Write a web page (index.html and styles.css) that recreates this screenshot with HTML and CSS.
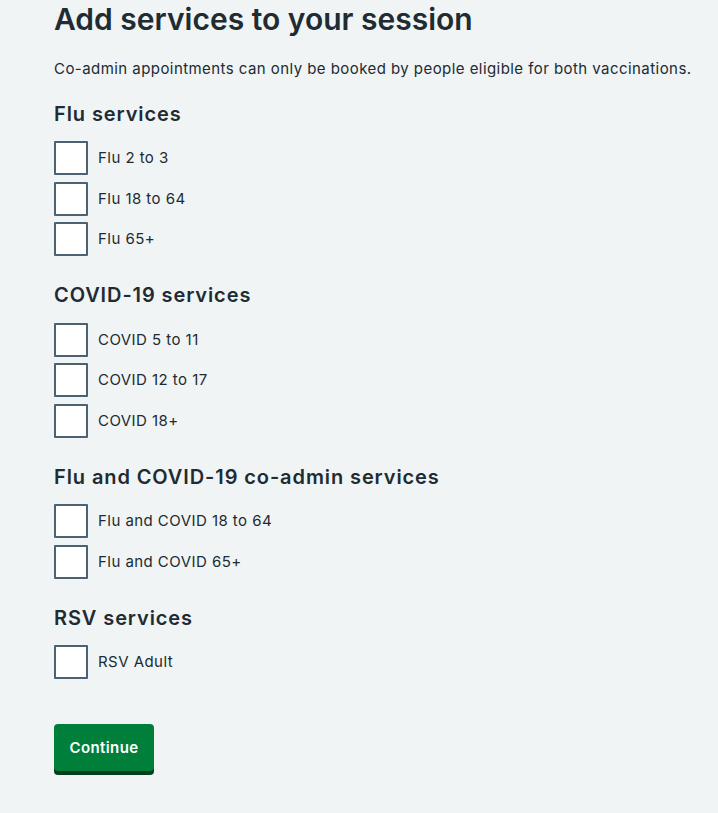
FILE: index.html
```html
<!DOCTYPE html>
<html lang="en">
<head>
  <meta charset="UTF-8" />
  <meta name="viewport" content="width=device-width, initial-scale=1.0" />
  <title>Add services to your session</title>
  <link rel="stylesheet" href="styles.css">
</head>
<body>

  <main class="page">
    <h1 class="page-title">Add services to your session</h1>
    <p class="hint">Co-admin appointments can only be booked by people eligible for both vaccinations.</p>

    <form class="services-form">
      <fieldset class="service-group">
        <legend class="group-title">Flu services</legend>
        <div class="checkboxes">
          <label class="checkbox-item"><input type="checkbox" name="services" value="flu-2-3"> Flu 2 to 3</label>
          <label class="checkbox-item"><input type="checkbox" name="services" value="flu-18-64"> Flu 18 to 64</label>
          <label class="checkbox-item"><input type="checkbox" name="services" value="flu-65"> Flu 65+</label>
        </div>
      </fieldset>

      <fieldset class="service-group">
        <legend class="group-title">COVID-19 services</legend>
        <div class="checkboxes">
          <label class="checkbox-item"><input type="checkbox" name="services" value="covid-5-11"> COVID 5 to 11</label>
          <label class="checkbox-item"><input type="checkbox" name="services" value="covid-12-17"> COVID 12 to 17</label>
          <label class="checkbox-item"><input type="checkbox" name="services" value="covid-18"> COVID 18+</label>
        </div>
      </fieldset>

      <fieldset class="service-group">
        <legend class="group-title">Flu and COVID-19 co-admin services</legend>
        <div class="checkboxes">
          <label class="checkbox-item"><input type="checkbox" name="services" value="flu-covid-18-64"> Flu and COVID 18 to 64</label>
          <label class="checkbox-item"><input type="checkbox" name="services" value="flu-covid-65"> Flu and COVID 65+</label>
        </div>
      </fieldset>

      <fieldset class="service-group">
        <legend class="group-title">RSV services</legend>
        <div class="checkboxes">
          <label class="checkbox-item"><input type="checkbox" name="services" value="rsv-adult"> RSV Adult</label>
        </div>
      </fieldset>

      <button type="submit" class="btn">Continue</button>
    </form>
  </main>

</body>
</html>
```

FILE: styles.css
```css
body {
  margin: 0;
  background-color: #f0f4f5;
  color: #212b32;
  font-family: Inter, "Noto Sans", sans-serif;
}

.page {
  padding: 1px 20px 40px 54px;
}

.page-title {
  font-size: 30px;
  line-height: 36px;
  font-weight: 600;
  margin: 0 0 20.5px;
}

.hint {
  font-size: 15px;
  line-height: 22px;
  letter-spacing: 0.44px;
  margin: 0 0 20px;
}

.service-group {
  border: none;
  padding: 0;
  margin: 0 0 25px;
}

.group-title {
  padding: 0;
  font-size: 20px;
  line-height: 28px;
  font-weight: 600;
  letter-spacing: 0.9px;
  margin-bottom: 13.5px;
}

.checkboxes {
  display: flex;
  flex-direction: column;
  gap: 6.5px;
}

.checkbox-item {
  display: flex;
  align-items: center;
  gap: 10px;
  font-size: 15px;
  line-height: 22px;
  letter-spacing: 0.45px;
  cursor: pointer;
}

.checkbox-item input {
  appearance: none;
  width: 34px;
  height: 34px;
  margin: 0;
  background: #ffffff;
  border: 2px solid #4c6272;
  border-radius: 1px;
  cursor: pointer;
}

.btn {
  margin-top: 20px;
  width: 100px;
  height: 47px;
  border: none;
  border-radius: 4px;
  background-color: #007f3b;
  box-shadow: 0 4px 0 #00401e;
  color: #ffffff;
  font-family: inherit;
  font-size: 15px;
  font-weight: 600;
  letter-spacing: 0.4px;
  cursor: pointer;
}

.btn:hover {
  background-color: #00662f;
}
```
